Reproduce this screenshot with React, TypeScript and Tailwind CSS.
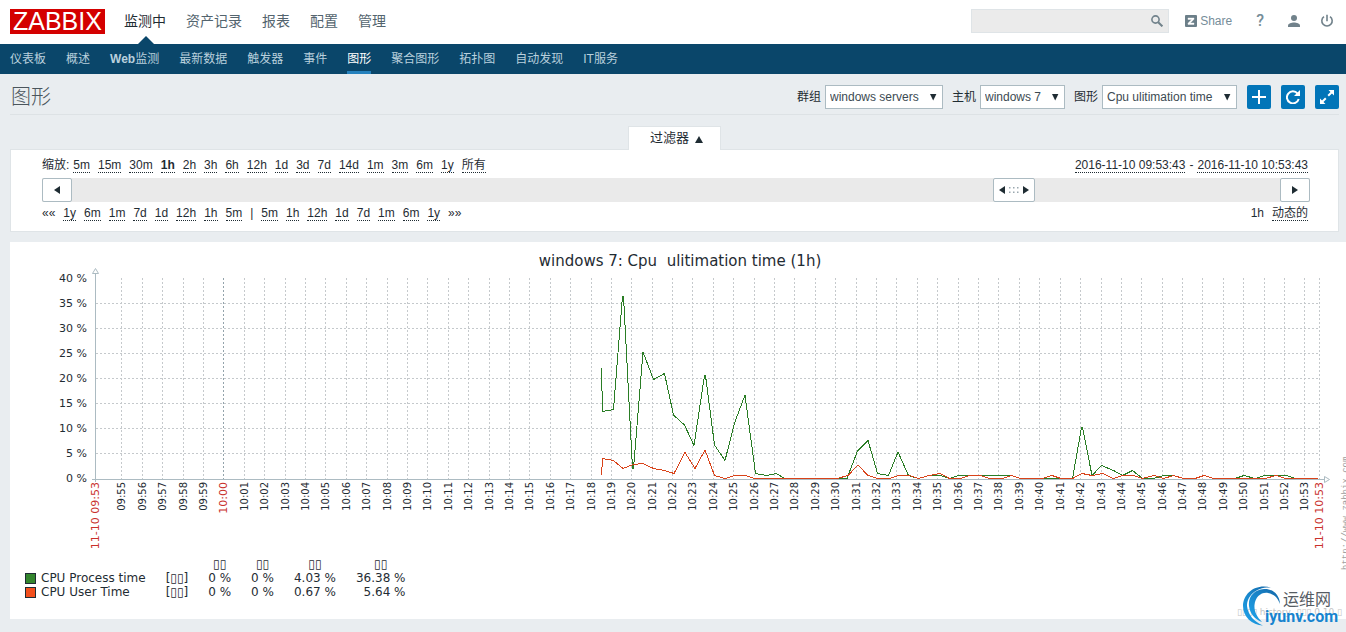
import React, { useState } from 'react';

const mainMenu = ['监测中', '资产记录', '报表', '配置', '管理'];
const subMenu = ['仪表板', '概述', 'Web监测', '最新数据', '触发器', '事件', '图形', '聚合图形', '拓扑图', '自动发现', 'IT服务'];

const zoomLinks = ['5m', '15m', '30m', '1h', '2h', '3h', '6h', '12h', '1d', '3d', '7d', '14d', '1m', '3m', '6m', '1y', '所有'];
const backLinks = ['1y', '6m', '1m', '7d', '1d', '12h', '1h', '5m'];
const forwardLinks = ['5m', '1h', '12h', '1d', '7d', '1m', '6m', '1y'];

const legend = [
  { name: 'CPU Process time', swatch: 'bg-[#33852d]', values: ['0 %', '0 %', '4.03 %', '36.38 %'] },
  { name: 'CPU User Time', swatch: 'bg-[#f24f1d]', values: ['0 %', '0 %', '0.67 %', '5.64 %'] },
];

const processTime =
  '601.5,368 602.5,411.5 613.5,409.5 622.5,296 623.5,296 632.5,468.5 633.5,468.5 643,352 653.5,379.5 664.5,373.5 673.5,415 684.5,425 694,445.5 704.5,375.5 705.5,375.5 714.5,445 725,460.5 734.5,423 745,395 755.5,473.5 766.5,475.5 776,473.5 785,478.5 847,478.5 857.5,451 868,440.5 877.5,473.5 888.5,475.5 898,452 908.5,475.5 918.5,478.5 929,475.5 940,475.5 949.5,478.5 958.5,475.5 1011.5,475.5 1020,478.5 1072.5,478.5 1081.5,427.5 1082.5,427.5 1092,475.5 1101.5,465.5 1113.5,470.5 1122.5,475.5 1132.5,470.5 1142.5,478.5 1153.5,478.5 1163.5,475.5 1173.5,475.5 1183.5,478.5 1195,478.5 1204,475.5 1214,478.5 1235,478.5 1244,475.5 1255,478.5 1265,475.5 1286,475.5 1295.5,478.5 1318,478.5';
const userTime =
  '601.5,475.5 602.5,458.5 613.5,460.5 623,468.5 633,464.5 643,463.5 653.5,468.5 664.5,470.5 674,473.5 685,452.5 695,468.5 705,450 714.5,475.5 725,478.5 735,475.5 745.5,475.5 755,478.5 837,478.5 848,475.5 858,465 868,475.5 878,478.5 890,478.5 898,475.5 909,475.5 918.5,478.5 929,475.5 940,473.5 949.5,478.5 960,478.5 970,475.5 980,475.5 990,478.5 1002,478.5 1012,475.5 1020,478.5 1042,478.5 1052,475.5 1061,478.5 1072.5,478.5 1082,473.5 1092,475.5 1103,473.5 1113,478.5 1123,475.5 1133,475.5 1142.5,478.5 1154,475.5 1163.5,478.5 1173.5,475.5 1183.5,478.5 1195,478.5 1204,475.5 1214,478.5 1265,478.5 1276,475.5 1286,478.5 1318,478.5';

// one tick per minute, 09:55 to 10:53
const ticks = Array.from({ length: 59 }, (_, i) => {
  const minute = 55 + i;
  const hour = minute < 60 ? '09' : '10';
  return {
    label: `${hour}:${String(minute % 60).padStart(2, '0')}`,
    x: Math.floor(121.8 + i * 20.4) + 0.5,
    major: minute === 60,
  };
});

function Dropdown({ id, label, options, width }: { id: string; label: string; options: string[]; width: string }) {
  return (
    <div className="flex items-center gap-1">
      <label htmlFor={id}>{label}</label>
      <div className="relative">
        <select id={id} className={`${width} h-6 appearance-none border border-[#acbbc2] bg-white pl-1 pr-5 text-[12px] text-[#3c4a52]`}>
          {options.map((option) => (
            <option key={option}>{option}</option>
          ))}
        </select>
        <svg className="pointer-events-none absolute right-1.5 top-2 h-2 w-2" viewBox="0 0 8 8" fill="#1f2c33">
          <path d="M1 1h6.4L4.2 7.4z" />
        </svg>
      </div>
    </div>
  );
}

function TimeLink({ label, bold }: { label: string; bold?: boolean }) {
  return (
    <a href="#" className={`border-b border-dotted border-[#1f2c33] ${bold ? 'font-bold' : ''}`}>
      {label}
    </a>
  );
}

function Header() {
  return (
    <header>
      <div className="flex h-11 items-center justify-between bg-white pl-2.5 pr-3">
        <div className="flex h-full items-center">
          <a href="#" className="-mt-0.5 flex h-[25px] items-center bg-[#d40000] px-[3px] text-[25px] leading-[25px] text-white">
            ZABBIX
          </a>
          <nav className="ml-[19px] flex h-full gap-5 text-[14px] leading-[42px]">
            {mainMenu.map((item, index) => (
              <a key={item} href="#" className={`relative ${index === 0 ? 'text-[#1f2c33]' : 'text-[#53646e]'}`}>
                {item}
                {index === 0 && (
                  <svg className="absolute bottom-0 left-3.5 h-2 w-4" viewBox="0 0 16 8" fill="#0a466a">
                    <path d="M0 8L8 0l8 8z" />
                  </svg>
                )}
              </a>
            ))}
          </nav>
        </div>
        <div className="flex items-center text-[12px] text-[#768d99]">
          <form className="relative mr-4 -mt-0.5">
            <input type="text" aria-label="Search" className="h-6 w-[198px] border border-[#dfe4e7] bg-[#ebebeb] pl-1 pr-6" />
            <button type="submit" aria-label="Search" className="absolute right-1.5 top-1.5">
              <svg width="12" height="12" viewBox="0 0 12 12" fill="none" stroke="#71828b">
                <circle cx="4.5" cy="4.5" r="3.6" strokeWidth="1.6" />
                <path d="M7.2 7.2l4.2 4.2" strokeWidth="2" />
              </svg>
            </button>
          </form>
          <a href="#" className="-mt-0.5 mr-6 flex items-center gap-[3px]">
            <svg width="12" height="12" viewBox="0 0 12 12">
              <rect width="12" height="12" rx="1" fill="#6c7f89" />
              <path d="M3 3h6v1.2L5.3 8H9v1.4H3V8.2L6.7 4.5H3z" fill="#fff" stroke="#fff" strokeWidth=".4" />
            </svg>
            Share
          </a>
          <a href="#" className="-mt-0.5 mr-6 font-[Roboto,sans-serif] text-[16px] font-medium leading-4" aria-label="Help">?</a>
          <a href="#" className="-mt-0.5 mr-5" aria-label="Profile">
            <svg width="12" height="12" viewBox="0 0 12 12" fill="#71828b">
              <circle cx="6" cy="3" r="3" />
              <path d="M0 12V10.4C0 8.6 3.5 7.5 6 7.5s6 1.1 6 2.9V12z" />
            </svg>
          </a>
          <a href="#" className="-mt-0.5" aria-label="Sign out">
            <svg width="14" height="14" viewBox="0 0 14 14" fill="none" stroke="#71828b" strokeWidth="1.6">
              <path d="M7 .8v6.4M4 2.6a5.2 5.2 0 1 0 6 0" />
            </svg>
          </a>
        </div>
      </div>
      <nav className="flex h-[30px] gap-5 bg-[#0a466a] pl-2.5 text-[12px] leading-[30px] text-[#b9d0dd]">
        {subMenu.map((item) => (
          <a key={item} href="#" className={item === '图形' ? 'border-b-[3px] border-[#2581bd] text-white' : ''}>
            {item === 'Web监测' ? (
              <>
                <b>Web</b>监测
              </>
            ) : (
              item
            )}
          </a>
        ))}
      </nav>
    </header>
  );
}

function PageTitle() {
  const button = 'flex h-6 w-6 items-center justify-center rounded-xs bg-[#0275b8]';
  return (
    <div className="flex h-[41px] items-center justify-between border-b border-[#dde2e5] pb-1">
      <h1 className="pl-px pt-2.5 text-[20px] font-light leading-8 text-[#4a555c]">图形</h1>
      <div className="flex items-center gap-2.5 pt-2.5">
        <div className="flex gap-[9px]">
          <Dropdown id="group" label="群组" options={['windows servers']} width="w-[118px]" />
          <Dropdown id="host" label="主机" options={['windows 7']} width="w-[85px]" />
          <Dropdown id="graph" label="图形" options={['Cpu ulitimation time']} width="w-[135px]" />
        </div>
        <button type="button" className={button} aria-label="Add to favourites">
          <svg width="14" height="14" viewBox="0 0 14 14" stroke="#fff" strokeWidth="2">
            <path d="M7 0v14M0 7h14" />
          </svg>
        </button>
        <button type="button" className={button} aria-label="Refresh">
          <svg width="14" height="14" viewBox="0 0 14 14" fill="none" stroke="#fff" strokeWidth="2">
            <path d="M11.6 3.6A6 6 0 1 0 12.7 9" />
            <path d="M14 0v6H8z" fill="#fff" stroke="none" />
          </svg>
        </button>
        <button type="button" className={button} aria-label="Fullscreen">
          <svg width="14" height="14" viewBox="0 0 14 14" fill="#fff" stroke="#fff">
            <path d="M14 0v5.500L8.500 0zM0 14V8.500L5.500 14z" stroke="none" />
            <path d="M12 2L8.200 5.800M2 12l3.800-3.800" strokeWidth="2" />
          </svg>
        </button>
      </div>
    </div>
  );
}

function TimeFilter() {
  const [position, setPosition] = useState(79);
  const arrowButton = 'flex h-6 w-[30px] shrink-0 items-center justify-center rounded-xs border border-[#acbbc2] bg-white';

  return (
    <section className="mt-[11px]">
      <button type="button" className="relative mx-auto -mb-px flex h-6 w-[93px] items-center justify-center gap-1.5 border border-b-0 border-[#dfe4e7] bg-white pb-0.5 pl-1 text-[13px]">
        过滤器
        <svg width="8" height="7" viewBox="0 0 8 7" fill="#1f2c33" className="mt-1">
          <path d="M0 7L4 0l4 7z" />
        </svg>
      </button>
      <div className="border border-[#dfe4e7] bg-white pb-2.5 pl-[31px] pr-7 pt-2 leading-[14px]">
        <div className="flex h-[15px] justify-between pr-0.5">
          <div className="flex gap-2">
            <span className="-mr-1">缩放:</span>
            {zoomLinks.map((label) => (
              <TimeLink key={label} label={label} bold={label === '1h'} />
            ))}
          </div>
          <div className="flex gap-1">
            <TimeLink label="2016-11-10 09:53:43" />
            <span>-</span>
            <TimeLink label="2016-11-10 10:53:43" />
          </div>
        </div>
        <div className="mb-1 mt-[5px] flex h-6 bg-[#eaeaea]">
          <button type="button" className={arrowButton} aria-label="Back">
            <svg width="6" height="8" viewBox="0 0 6 8" fill="#1f2c33">
              <path d="M6 0v8L0 4z" />
            </svg>
          </button>
          <div className="relative flex-1">
            <input
              type="range"
              aria-label="Time period"
              min={0}
              max={100}
              value={position}
              onChange={(e) => setPosition(Number(e.target.value))}
              className="h-6 w-full cursor-pointer opacity-0"
            />
            <div
              className="pointer-events-none absolute top-0 flex h-6 w-[42px] items-center justify-center gap-1 rounded-xs border border-[#acbbc2] bg-white"
              style={{ left: `calc((100% - 42px) * ${position / 100})` }}
            >
              <svg width="30" height="8" viewBox="0 0 30 8" fill="#1f2c33">
                <path d="M6 0v8L0 4zM24 0v8l6-4z" />
                <path d="M10 1h1.500v1.500H10zM14 1h1.500v1.500H14zM18 1h1.500v1.500H18zM10 5.500h1.500V7H10zM14 5.500h1.500V7H14zM18 5.500h1.500V7H18z" fill="#9aa8af" />
              </svg>
            </div>
          </div>
          <button type="button" className={arrowButton} aria-label="Forward">
            <svg width="6" height="8" viewBox="0 0 6 8" fill="#1f2c33">
              <path d="M0 0v8l6-4z" />
            </svg>
          </button>
        </div>
        <div className="flex h-[15px] justify-between pr-0.5">
          <div className="flex gap-2">
            <span>««</span>
            {backLinks.map((label) => (
              <TimeLink key={label} label={label} />
            ))}
            <span>|</span>
            {forwardLinks.map((label) => (
              <TimeLink key={label} label={label} />
            ))}
            <span>»»</span>
          </div>
          <div className="flex gap-2">
            <span>1h</span>
            <TimeLink label="动态的" />
          </div>
        </div>
      </div>
    </section>
  );
}

function Chart() {
  return (
    <svg viewBox="10 242 1336 315" className="block w-full overflow-visible" fontFamily='"DejaVu Sans", sans-serif' fill="#1f2c33">
      <text x="680" y="266" fontSize="15" textAnchor="middle" className="whitespace-pre">
        {'windows 7: Cpu  ulitimation time (1h)'}
      </text>

      <g stroke="#c5c9cc" strokeDasharray="2 2">
        {[303.5, 328.5, 353.5, 378.5, 403.5, 428.5, 453.5].map((y) => (
          <line key={y} x1="96" x2="1319" y1={y} y2={y} />
        ))}
        {ticks.map((tick) => (
          <line key={tick.label} x1={tick.x} x2={tick.x} y1="278" y2="479" stroke={tick.major ? '#93a3ab' : undefined} />
        ))}
        <line x1="1319.5" x2="1319.5" y1="278" y2="479" />
      </g>

      <g stroke="#acbbc2" fill="#fff">
        <path d="M95.5 273v209M92 479.500h1232" />
        <path d="M92.500 273.500l3-5 3 5z" />
        <path d="M1324.500 476.500v6l5-3z" />
      </g>

      {[40, 35, 30, 25, 20, 15, 10, 5, 0].map((value, i) => (
        <text key={value} x="87" y={282 + i * 25} fontSize="11" textAnchor="end">
          {value} %
        </text>
      ))}

      {ticks.map((tick) => (
        <text
          key={tick.label}
          transform={`translate(${tick.x + 3.5} 482) rotate(-90)`}
          fontSize={tick.major ? 11 : 10}
          textAnchor="end"
          fill={tick.major ? '#c9302c' : undefined}
        >
          {tick.label}
        </text>
      ))}
      <g fontSize="11" textAnchor="end" fill="#c9302c">
        <text transform="translate(99 482) rotate(-90)">11-10 09:53</text>
        <text transform="translate(1323 482) rotate(-90)">11-10 10:53</text>
      </g>

      <g fill="none" shapeRendering="crispEdges">
        <polyline points={processTime} stroke="#2a7d25" />
        <polyline points={userTime} stroke="#d9431a" />
      </g>

      <text transform="translate(1348 570) rotate(-90)" fontSize="9" fontFamily='"Liberation Mono", monospace' fill="#a0a0a0">
        http://www.zabbix.com
      </text>
    </svg>
  );
}

function Legend() {
  return (
    <table className="ml-[15px] font-['DejaVu_Sans',sans-serif] text-[12px] leading-[14px]">
      <thead>
        <tr>
          <th />
          <th />
          {[0, 1, 2, 3].map((i) => (
            <th key={i} className="pl-5 text-center font-normal">▯▯</th>
          ))}
        </tr>
      </thead>
      <tbody>
        {legend.map((row) => (
          <tr key={row.name}>
            <td>
              <div className="flex items-center gap-[5px]">
                <span className={`h-[11px] w-[11px] border border-[#1f2c33] ${row.swatch}`} />
                {row.name}
              </div>
            </td>
            <td className="pl-5">[▯▯]</td>
            {row.values.map((value, i) => (
              <td key={i} className="pl-5 text-right">{value}</td>
            ))}
          </tr>
        ))}
      </tbody>
    </table>
  );
}

function Watermark() {
  return (
    <svg className="absolute bottom-1 right-1 h-[44px] w-[100px]" viewBox="1242 584 100 44">
      <defs>
        <linearGradient id="swirl" x1="0" y1="1" x2="1" y2="0">
          <stop offset="0" stopColor="#1fa6ee" />
          <stop offset="1" stopColor="#1467a8" />
        </linearGradient>
      </defs>
      <path d="M1271 586.500C1256 582 1243 592 1243 605c0 11 9 19 20 19.500-9-4-15-10.500-16-19.500 0-11 10-19.500 24-18.500z" fill="url(#swirl)" />
      <path d="M1280 603c-.5-10-8-15.500-16-15-10 .5-16 8-15 17 1 8 6 13.500 13 16-5.500-5.500-8-10.500-7.500-17 .8-8 6.500-13 13.500-12 6 .8 10 5 12 11z" fill="url(#swirl)" />
      <text x="1283" y="604" fontSize="16" fill="#565c63" fontFamily='"Noto Sans CJK SC", sans-serif'>运维网</text>
      <text x="1265" y="621" fontSize="16" fontWeight="bold" fill="#1784cf" fontFamily="Roboto, sans-serif">iyunv.com</text>
    </svg>
  );
}

export default function App() {
  return (
    <div className="relative min-h-screen overflow-hidden bg-[#e9edf0] font-['Liberation_Sans','Noto_Sans_CJK_SC',sans-serif] text-[12px] text-[#1f2c33]">
      <Header />
      <main className="pb-3.5 pl-2.5">
        <div className="pr-[7px]">
          <PageTitle />
          <TimeFilter />
        </div>
        <section className="relative mt-2.5 overflow-hidden bg-white pb-5">
          <Chart />
          <Legend />
          <p className="absolute bottom-0 right-1 font-['DejaVu_Sans',sans-serif] text-[9px] text-[#c4c4c4]">
            ▯▯▯▯ history, ▯▯▯ 0.10 ▯
          </p>
        </section>
      </main>
      <Watermark />
    </div>
  );
}
